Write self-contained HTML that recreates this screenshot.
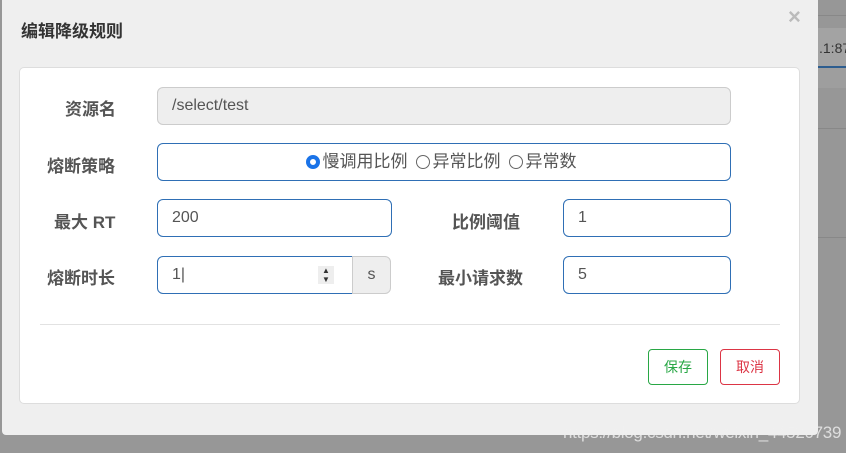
<!DOCTYPE html>
<html><head><meta charset="utf-8"><style>
*{box-sizing:border-box;margin:0;padding:0}
body{width:846px;height:453px;background:#979797;position:relative;overflow:hidden;font-family:"Liberation Sans","Noto Sans CJK SC",sans-serif}
.dlg{position:absolute;left:2px;top:0;width:816px;height:435px;background:#efefef;border-radius:0 0 4px 4px}
.title{position:absolute;left:19px;top:17px;font-size:17px;font-weight:bold;color:#333}
.x{position:absolute;left:786px;top:4px;font-size:22px;color:#bbb;font-weight:bold}
.card{position:absolute;left:17px;top:67px;width:781px;height:337px;background:#fff;border:1px solid #ddd;border-radius:5px}
.lbl{position:absolute;font-size:17px;font-weight:bold;color:#555}
.in{position:absolute;height:38px;border:1px solid #2f6fb5;border-radius:6px;font-size:16px;color:#555;padding:0 14px;line-height:36px;background:#fff}
.btn{position:absolute;height:36px;width:60px;border-radius:4px;font-size:14px;text-align:center;line-height:34px}
.r{display:inline-block;width:14px;height:14px;border:1px solid #666;border-radius:50%;vertical-align:-2px;margin-right:3px;margin-left:8px;position:relative}
</style></head><body>
<div style="position:absolute;left:818px;top:15px;width:28px;height:1px;background:#888"></div>
<div style="position:absolute;left:818px;top:28px;width:28px;height:40px;background:#a3a3a3;border-bottom:2px solid #2d5d8f;font-size:14px;color:#333;line-height:40px;padding-left:1px">.1:87</div>
<div style="position:absolute;left:818px;top:68px;width:28px;height:20px;background:#9e9e9e"></div>
<div style="position:absolute;left:818px;top:128px;width:28px;height:1px;background:#888"></div>
<div style="position:absolute;left:818px;top:237px;width:28px;height:1px;background:#888"></div>
<div class="dlg">
<div class="title">编辑降级规则</div>
<div class="x">×</div>
<div class="card">
<div class="lbl" style="left:45px;top:27px">资源名</div>
<div class="in" style="left:137px;top:19px;width:574px;border-color:#ccc;background:#eee">/select/test</div>
<div class="lbl" style="left:27px;top:84px">熔断策略</div>
<div class="in" style="left:137px;top:75px;width:574px;text-align:center;padding-left:0;font-size:17px"><span class="r" style="border:4px solid #1a73e8"></span>慢调用比例<span class="r"></span>异常比例<span class="r"></span>异常数</div>
<div class="lbl" style="left:34px;top:140px">最大 RT</div>
<div class="in" style="left:137px;top:131px;width:235px">200</div>
<div class="lbl" style="left:432px;top:140px">比例阈值</div>
<div class="in" style="left:543px;top:131px;width:168px">1</div>
<div class="lbl" style="left:27px;top:196px">熔断时长</div>
<div class="in" style="left:137px;top:188px;width:196px;border-radius:6px 0 0 6px">1|<span style="position:absolute;left:160px;top:9px;width:16px;height:18px;background:#eee;font-size:8px;line-height:9px;text-align:center;color:#333">▲<br>▼</span></div>
<div class="in" style="left:332px;top:188px;width:39px;border-color:#ccc;background:#eee;border-radius:0 6px 6px 0;padding:0;text-align:center">s</div>
<div class="lbl" style="left:418px;top:196px">最小请求数</div>
<div class="in" style="left:543px;top:188px;width:168px">5</div>
<div style="position:absolute;left:20px;top:256px;width:740px;height:1px;background:#e2e2e2"></div>
<div class="btn" style="left:628px;top:281px;border:1px solid #28a745;color:#28a745">保存</div>
<div class="btn" style="left:700px;top:281px;border:1px solid #dc3545;color:#dc3545">取消</div>
</div>
</div>
<div style="position:absolute;left:563px;top:423px;font-size:17px;color:#f0f0f0;opacity:.8;letter-spacing:-0.3px">https://blog.csdn.net/weixin_44520739</div>
</body></html>
